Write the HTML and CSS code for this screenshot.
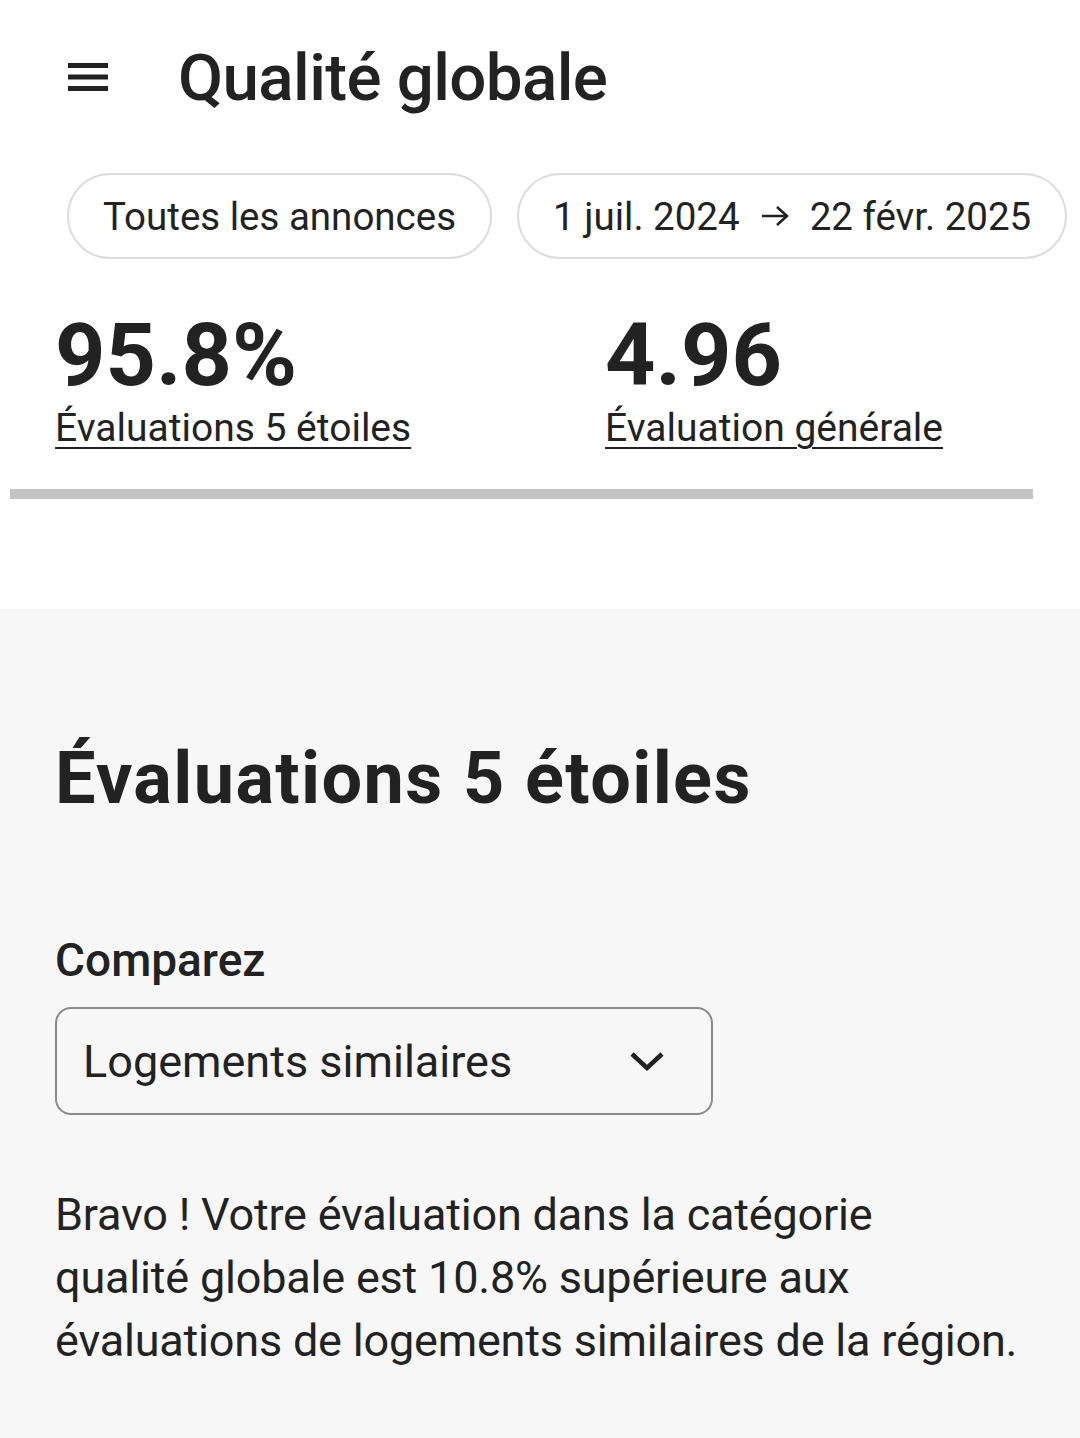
FILE: index.html
```html
<!DOCTYPE html>
<html lang="fr">
<head>
    <meta charset="UTF-8">
    <meta name="viewport" content="width=device-width, initial-scale=1.0">
    <title>Qualité globale</title>
    <link rel="stylesheet" href="styles.css">
</head>
<body>
    <header class="topbar">
        <button class="menu" aria-label="Menu">
            <svg width="40" height="30" viewBox="0 0 40 30">
                <rect x="0" y="1" width="40" height="5" fill="#222"/>
                <rect x="0" y="12.5" width="40" height="5" fill="#222"/>
                <rect x="0" y="24" width="40" height="5" fill="#222"/>
            </svg>
        </button>
        <h1>Qualité globale</h1>
    </header>

    <div class="filters">
        <button class="pill">Toutes les annonces</button>
        <button class="pill">1 juil. 2024
            <svg class="arrow" width="30" height="22" viewBox="0 0 30 22">
                <path d="M2 11 H27 M17 2 L27 11 L17 20" fill="none" stroke="#222" stroke-width="2.5"/>
            </svg>
            22 févr. 2025</button>
    </div>

    <div class="stats">
        <div class="stat">
            <div class="value">95.8%</div>
            <a class="label" href="#">Évaluations 5 étoiles</a>
        </div>
        <div class="stat">
            <div class="value">4.96</div>
            <a class="label" href="#">Évaluation générale</a>
        </div>
    </div>
    <div class="scrollbar"></div>

    <section class="detail">
        <h2>Évaluations 5 étoiles</h2>
        <h3>Comparez</h3>
        <div class="select">
            <span>Logements similaires</span>
            <svg width="36" height="22" viewBox="0 0 36 22">
                <path d="M3 4 L18 18 L33 4" fill="none" stroke="#222" stroke-width="4.5"/>
            </svg>
        </div>
        <p class="summary">Bravo ! Votre évaluation dans la catégorie<br>
            qualité globale est 10.8% supérieure aux<br>
            évaluations de logements similaires de la région.</p>
    </section>
</body>
</html>
```

FILE: styles.css
```css
* {
    margin: 0;
    padding: 0;
    box-sizing: border-box;
}

body {
    font-family: Roboto, "Noto Sans", sans-serif;
    color: #222;
    background: #fff;
    width: 1080px;
    min-height: 1438px;
}

.topbar {
    display: flex;
    align-items: center;
    height: 154px;
    padding-left: 68px;
}

.menu {
    border: none;
    background: none;
    display: flex;
    margin-right: 70px;
}

h1 {
    font-size: 65.5px;
    font-weight: 500;
    letter-spacing: -0.6px;
}

.filters {
    display: flex;
    gap: 25px;
    padding-left: 67px;
    margin-top: 19px;
}

.pill {
    font-family: inherit;
    color: #222;
    background: #fff;
    border: 2px solid #dcdcdc;
    border-radius: 43px;
    height: 86px;
    padding: 0 34px;
    font-size: 38.5px;
    font-weight: 400;
    white-space: nowrap;
    display: flex;
    align-items: center;
}

.arrow {
    margin: 0 20px;
}

.stats {
    display: flex;
    padding-left: 55px;
    margin-top: 52px;
}

.stat {
    flex: 0 0 550px;
}

.stat + .stat {
    flex: 1;
}

.value {
    font-size: 88px;
    font-weight: 700;
    line-height: 1;
}

.label {
    display: inline-block;
    margin-top: 6px;
    font-size: 39px;
    color: #222;
    text-decoration: underline;
    text-decoration-thickness: 2px;
    text-underline-offset: 6px;
}

.scrollbar {
    width: 1023px;
    height: 10px;
    margin: 38px 0 0 10px;
    background: #c4c4c4;
}

.detail {
    margin-top: 110px;
    background: #f7f7f7;
    padding: 127px 0 60px 55px;
    min-height: 829px;
}

h2 {
    font-size: 72px;
    font-weight: 700;
    letter-spacing: 1.4px;
    line-height: 1.2;
}

h3 {
    margin-top: 111px;
    font-size: 46px;
    font-weight: 500;
}

.select {
    margin-top: 20px;
    width: 658px;
    height: 108px;
    border: 2px solid #8a8a8a;
    border-radius: 16px;
    display: flex;
    align-items: center;
    justify-content: space-between;
    padding: 0 46px 0 26px;
    font-size: 45px;
}

.summary {
    margin-top: 68px;
    font-size: 45px;
    line-height: 63px;
    letter-spacing: -0.2px;
}
```
